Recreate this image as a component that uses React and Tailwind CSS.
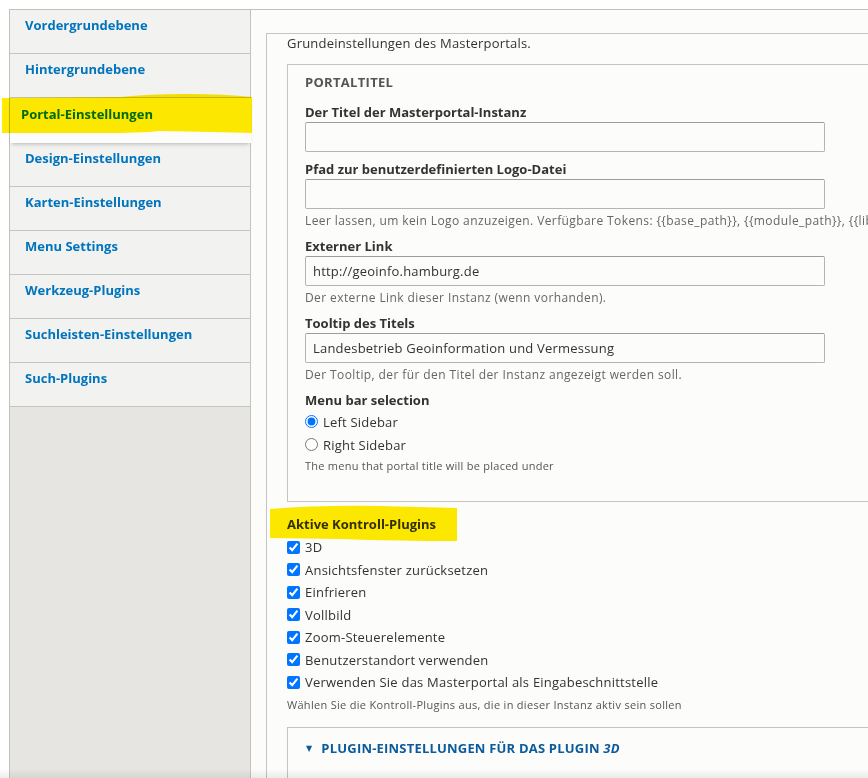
import React from 'react';

const tabs = [
  'Vordergrundebene',
  'Hintergrundebene',
  'Portal-Einstellungen',
  'Design-Einstellungen',
  'Karten-Einstellungen',
  'Menu Settings',
  'Werkzeug-Plugins',
  'Suchleisten-Einstellungen',
  'Such-Plugins',
];

const plugins = [
  '3D',
  'Ansichtsfenster zurücksetzen',
  'Einfrieren',
  'Vollbild',
  'Zoom-Steuerelemente',
  'Benutzerstandort verwenden',
  'Verwenden Sie das Masterportal als Eingabeschnittstelle',
];

function TextField({ label, value, desc }) {
  return (
    <div className="mt-[8px]">
      <div className="font-bold text-[#333] leading-[19px]">{label}</div>
      <div className="w-[520px] h-[30px] border border-[#b4b4b0] border-t-[#9c9c98] rounded-[2px] bg-[#fcfcfa] px-[7px] flex items-center text-[#333] tracking-[0.2px]">
        {value}
      </div>
      {desc && <div className="mt-[4px] text-[12px] leading-[16px] text-[#666] tracking-[0.4px] whitespace-nowrap">{desc}</div>}
    </div>
  );
}

export default function App() {
  return (
    <div
      className="relative w-full h-[778px] overflow-hidden bg-white text-[13px] leading-[18px]"
      style={{ fontFamily: '"Open Sans", "DejaVu Sans", sans-serif' }}
    >
      <div className="ml-[9px] mt-[9px] w-[1100px] h-[769px] flex border-t border-l border-[#c2c2be]">
        {/* vertical tabs */}
        <div className="w-[241px] shrink-0 border-r border-[#c2c2be] bg-[#e6e5e1]">
          {tabs.map((t) =>
            t === 'Portal-Einstellungen' ? (
              <div
                key={t}
                className="relative z-10 h-[45px] -mr-[1px] bg-[#fcfcfa] pl-[11px] pt-[7px] font-bold text-[#0074bd] shadow-[0_3px_4px_-2px_rgba(0,0,0,0.25)]"
              >
                {t}
              </div>
            ) : (
              <div key={t} className="h-[44px] border-b border-[#c4c4c0] bg-[#f2f2f0] pl-[15px] pt-[6px] font-bold text-[#0074bd]">
                {t}
              </div>
            )
          )}
        </div>

        {/* content pane */}
        <div className="flex-1 bg-[#fcfcfa] pl-[15px] pt-[23px]">
          <div className="w-[800px] h-[900px] border border-[#c4c4c0] px-[20px]">
            <div className="text-[#333] tracking-[0.2px]">Grundeinstellungen des Masterportals.</div>

            <div className="mt-[12px] border border-[#c4c4c0] pl-[17px] pt-[8px] pb-[28px]">
              <div className="font-bold text-[#555] tracking-[0.3px]">PORTALTITEL</div>
              <div className="pt-[4px]">
                <TextField label="Der Titel der Masterportal-Instanz" value="" />
              </div>
              <TextField
                label="Pfad zur benutzerdefinierten Logo-Datei"
                value=""
                desc="Leer lassen, um kein Logo anzuzeigen. Verfügbare Tokens: {{base_path}}, {{module_path}}, {{library_path}}."
              />
              <TextField
                label="Externer Link"
                value="http://geoinfo.hamburg.de"
                desc="Der externe Link dieser Instanz (wenn vorhanden)."
              />
              <TextField
                label="Tooltip des Titels"
                value="Landesbetrieb Geoinformation und Vermessung"
                desc="Der Tooltip, der für den Titel der Instanz angezeigt werden soll."
              />

              <div className="mt-[8px] font-bold text-[#333] leading-[19px]">Menu bar selection</div>
              <label className="h-[23px] flex items-center gap-[5px] text-[#333] tracking-[0.2px]">
                <input type="radio" name="menubar" defaultChecked className="m-0 w-[13px] h-[13px]" />
                Left Sidebar
              </label>
              <label className="h-[23px] flex items-center gap-[5px] text-[#333] tracking-[0.2px]">
                <input type="radio" name="menubar" className="m-0 w-[13px] h-[13px]" />
                Right Sidebar
              </label>
              <div className="mt-[3px] text-[11px] leading-[14px] text-[#555] tracking-[0.25px]">The menu that portal title will be placed under</div>
            </div>

            <div className="mt-[13px] font-bold text-[#333]">Aktive Kontroll-Plugins</div>
            <div className="mt-[3px]">
              {plugins.map((p) => (
                <label key={p} className="h-[22.5px] flex items-center gap-[5px] text-[#333] tracking-[0.22px]">
                  <input type="checkbox" defaultChecked className="m-0 w-[13px] h-[13px]" />
                  {p}
                </label>
              ))}
            </div>
            <div className="mt-[4px] text-[11px] leading-[14px] text-[#555] tracking-[0.3px]">
              Wählen Sie die Kontroll-Plugins aus, die in dieser Instanz aktiv sein sollen
            </div>

            <div className="mt-[15px] border border-[#c4c4c0] h-[120px] pl-[18px] pt-[11px]">
              <div className="flex items-center font-bold text-[#0a5a9c] tracking-[0.2px]">
                <span className="text-[8px] mr-[9px]">▼</span>
                <span>
                  PLUGIN-EINSTELLUNGEN FÜR DAS PLUGIN <i>3D</i>
                </span>
              </div>
            </div>
          </div>
        </div>
      </div>

      {/* marker highlights */}
      <svg className="absolute z-20 inset-0 w-[868px] h-[778px] pointer-events-none mix-blend-multiply" viewBox="0 0 868 778">
        <path d="M2 98 L120 97 Q150 94 185 94 Q225 94 252 97 L252 133 Q215 132 160 131 Q140 133 100 133 L2 133 Z" fill="#ffea00" />
        <path d="M270 509 Q320 505 380 506 L457 508 L457 541 Q400 541 340 539 L270 538 Z" fill="#ffea00" />
      </svg>

      {/* bottom fade */}
      <div className="absolute z-30 left-0 right-0 bottom-0 h-[9px] bg-gradient-to-b from-transparent to-[rgba(0,0,0,0.07)] pointer-events-none" />
    </div>
  );
}
